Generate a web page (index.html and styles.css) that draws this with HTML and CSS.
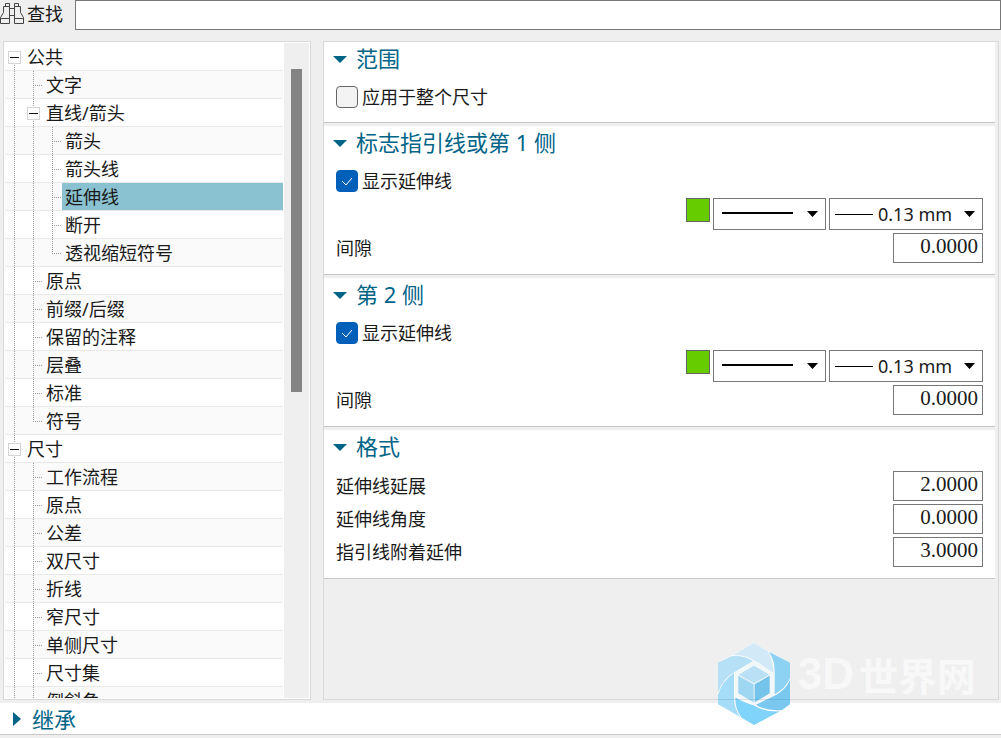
FILE: index.html
```html
<!DOCTYPE html>
<html lang="zh-CN">
<head>
<meta charset="utf-8">
<title>尺寸设置</title>
<link rel="stylesheet" href="styles.css">
</head>
<body>
<div class="search">
  <svg class="search-icon" viewBox="0 0 25 26" width="25" height="26" fill="none" stroke="#444" aria-hidden="true">
    <path d="M5.500 3.500h4v3h-4zM14.500 3.500h4v3h-4zM3.500 6.500h6v17h-9v-6l3-5zM20.500 6.500h-6v17h9v-6l-3-5zM.500 18.500h9M14.500 18.500h9M9.500 8.500h5M9.500 15.500h5"/>
  </svg>
  <label class="search-label" for="find">查找</label>
  <input class="search-box" id="find" type="text">
</div>

<main class="main">
  <nav class="tree" aria-label="设置类别">
    <ul class="tree-list">
      <li class="row"><span class="cell start"><button class="toggle" aria-label="折叠公共"></button></span><span class="name">公共</span></li>
      <li class="row"><span class="cell line"></span><span class="cell line stub"></span><span class="name">文字</span></li>
      <li class="row"><span class="cell line"></span><span class="cell line"><button class="toggle" aria-label="折叠直线/箭头"></button></span><span class="name">直线/箭头</span></li>
      <li class="row"><span class="cell line"></span><span class="cell line"></span><span class="cell line stub"></span><span class="name">箭头</span></li>
      <li class="row"><span class="cell line"></span><span class="cell line"></span><span class="cell line stub"></span><span class="name">箭头线</span></li>
      <li class="row"><span class="cell line"></span><span class="cell line"></span><span class="cell line stub"></span><span class="name selected">延伸线</span></li>
      <li class="row"><span class="cell line"></span><span class="cell line"></span><span class="cell line stub"></span><span class="name">断开</span></li>
      <li class="row"><span class="cell line"></span><span class="cell line"></span><span class="cell end stub"></span><span class="name">透视缩短符号</span></li>
      <li class="row"><span class="cell line"></span><span class="cell line stub"></span><span class="name">原点</span></li>
      <li class="row"><span class="cell line"></span><span class="cell line stub"></span><span class="name">前缀/后缀</span></li>
      <li class="row"><span class="cell line"></span><span class="cell line stub"></span><span class="name">保留的注释</span></li>
      <li class="row"><span class="cell line"></span><span class="cell line stub"></span><span class="name">层叠</span></li>
      <li class="row"><span class="cell line"></span><span class="cell line stub"></span><span class="name">标准</span></li>
      <li class="row"><span class="cell line"></span><span class="cell end stub"></span><span class="name">符号</span></li>
      <li class="row"><span class="cell line"><button class="toggle" aria-label="折叠尺寸"></button></span><span class="name">尺寸</span></li>
      <li class="row"><span class="cell line"></span><span class="cell line stub"></span><span class="name">工作流程</span></li>
      <li class="row"><span class="cell line"></span><span class="cell line stub"></span><span class="name">原点</span></li>
      <li class="row"><span class="cell line"></span><span class="cell line stub"></span><span class="name">公差</span></li>
      <li class="row"><span class="cell line"></span><span class="cell line stub"></span><span class="name">双尺寸</span></li>
      <li class="row"><span class="cell line"></span><span class="cell line stub"></span><span class="name">折线</span></li>
      <li class="row"><span class="cell line"></span><span class="cell line stub"></span><span class="name">窄尺寸</span></li>
      <li class="row"><span class="cell line"></span><span class="cell line stub"></span><span class="name">单侧尺寸</span></li>
      <li class="row"><span class="cell line"></span><span class="cell line stub"></span><span class="name">尺寸集</span></li>
      <li class="row"><span class="cell line"></span><span class="cell line stub"></span><span class="name">倒斜角</span></li>
    </ul>
    <div class="scrollbar"><div class="thumb"></div></div>
  </nav>

  <div class="panel">
    <section class="group group-short">
      <h2 class="title"><svg class="arrow" viewBox="0 0 14 7" width="14" height="7"><path d="M0 0h14L7 7z"/></svg>范围</h2>
      <label class="check"><input type="checkbox">应用于整个尺寸</label>
    </section>

    <section class="group">
      <h2 class="title"><svg class="arrow" viewBox="0 0 14 7" width="14" height="7"><path d="M0 0h14L7 7z"/></svg>标志指引线或第 1 侧</h2>
      <label class="check"><input type="checkbox" checked>显示延伸线</label>
      <div class="styles">
        <button class="swatch" aria-label="颜色"></button>
        <div class="combo combo-line">
          <select aria-label="线型"><option aria-label="实线"></option></select>
          <svg viewBox="0 0 113 32" width="113" height="32" aria-hidden="true"><path d="M9 14h71v2H9zM94 13h11l-5.500 6z"/></svg>
        </div>
        <div class="combo combo-width">
          <select aria-label="线宽"><option>0.13 mm</option></select>
          <svg viewBox="0 0 154 32" width="154" height="32" aria-hidden="true"><path d="M6 16h38v1H6zM135 13h11l-5.500 6z"/></svg>
        </div>
      </div>
      <div class="fields">
        <div class="field"><label for="gap1">间隙</label><input id="gap1" type="text" value="0.0000"></div>
      </div>
    </section>

    <section class="group">
      <h2 class="title"><svg class="arrow" viewBox="0 0 14 7" width="14" height="7"><path d="M0 0h14L7 7z"/></svg>第 2 侧</h2>
      <label class="check"><input type="checkbox" checked>显示延伸线</label>
      <div class="styles">
        <button class="swatch" aria-label="颜色"></button>
        <div class="combo combo-line">
          <select aria-label="线型"><option aria-label="实线"></option></select>
          <svg viewBox="0 0 113 32" width="113" height="32" aria-hidden="true"><path d="M9 14h71v2H9zM94 13h11l-5.500 6z"/></svg>
        </div>
        <div class="combo combo-width">
          <select aria-label="线宽"><option>0.13 mm</option></select>
          <svg viewBox="0 0 154 32" width="154" height="32" aria-hidden="true"><path d="M6 16h38v1H6zM135 13h11l-5.500 6z"/></svg>
        </div>
      </div>
      <div class="fields">
        <div class="field"><label for="gap2">间隙</label><input id="gap2" type="text" value="0.0000"></div>
      </div>
    </section>

    <section class="group">
      <h2 class="title"><svg class="arrow" viewBox="0 0 14 7" width="14" height="7"><path d="M0 0h14L7 7z"/></svg>格式</h2>
      <div class="fields fields-first">
        <div class="field"><label for="ext">延伸线延展</label><input id="ext" type="text" value="2.0000"></div>
        <div class="field"><label for="angle">延伸线角度</label><input id="angle" type="text" value="0.0000"></div>
        <div class="field"><label for="attach">指引线附着延伸</label><input id="attach" type="text" value="3.0000"></div>
      </div>
    </section>
  </div>
</main>

<footer class="inherit">
  <h2 class="title"><svg class="arrow" viewBox="0 0 8 14" width="8" height="14"><path d="M0 0l8 7-8 7z"/></svg>继承</h2>
</footer>

<div class="watermark">
  <svg viewBox="0 0 240 264" width="80" height="88" aria-hidden="true">
    <path fill="#fff" fill-opacity=".8" d="M120 9l108 59v125l-108 62-108-62V68z"/>
    <path fill="#d2eaf7" d="M56 46l64-37 41 24q21 36 17 76-18-28-56-47-26-18-66-16z"/>
    <path fill="#8dd2f3" d="M165 35l63 33v47q-15 33-46 48V98q1-36-17-63z"/>
    <path fill="#7ac8f0" d="M228 120v73l-24 17q-50 4-78-16l54-26q34-16 48-48z"/>
    <path fill="#80d3fa" d="M64 172q22 14 54 24 34 20 80 18l-78 41-37-22q-20-26-19-61z"/>
    <path fill="#a5dcf8" d="M12 165q12-42 48-66v71q0 36 19 61l-67-38z"/>
    <path fill="#b6e0f5" d="M12 68l40-19q38-4 65 14L62 96q-36 20-50 62z"/>
    <path fill="#f2f7fa" d="M120 63l59 35v66l-59 32-58-31V97z"/>
    <path fill="#b9e0f5" d="M120 77l46 27-46 26-46-26z"/>
    <path fill="#9fd6f2" d="M73 107l46 26v54l-46-27z"/>
    <path fill="#74c3ea" d="M167 107l-45 26v54l45-27z"/>
    <path fill="#3a6c88" fill-opacity=".18" d="M12 177h216v3H12z"/>
  </svg>
  <span class="mark-latin">3D</span><span class="mark-cjk">世界网</span>
</div>
</body>
</html>
```
FILE: styles.css
```css
* { box-sizing: border-box; }

body {
  margin: 0;
  height: 100vh;
  display: flex;
  flex-direction: column;
  position: relative;
  overflow: hidden;
  padding-bottom: 3px;
  background: #efefef;
  color: #1a1a1a;
  font: 18px/29px "Noto Sans", "Noto Sans CJK SC", sans-serif;
}

button, input, select { margin: 0; border-radius: 0; color: inherit; }

/* Search bar */
.search { display: flex; height: 30px; }
.search-icon { flex: none; }
.search-label { width: 50px; padding-left: 2px; }
.search-box { flex: 1; min-width: 0; border: 1px solid #777; background: #fff; font: inherit; }

.main {
  flex: 1;
  min-height: 0;
  display: grid;
  grid-template-columns: 308px 1fr;
  gap: 12px;
  margin: 11px 2px 3px 3px;
}

/* Category tree */
.tree {
  display: flex;
  min-height: 0;
  padding: 1px;
  border: 1px solid #d9d9d9;
  background: #fff;
}
.tree-list { flex: 1; margin: 0; padding: 0; list-style: none; overflow: hidden; }
.row { display: flex; height: 28px; border-bottom: 1px solid #e8e8e8; }
.row:nth-child(even) { background: #fafafa; }
.name { height: 27px; padding-left: 3px; white-space: nowrap; }
.selected { flex: 1; background: #8bc2d1; }

.cell {
  --down: repeating-linear-gradient(#999 0 1px, transparent 1px 2px);
  --across: repeating-linear-gradient(90deg, #999 0 1px, transparent 1px 2px);
  flex: none;
  width: 19px;
  height: 28px;
  padding: 8px 3px;
  background-repeat: no-repeat;
}
.start { background-image: var(--down); background-size: 1px 14px; background-position: 9px 14px; }
.line { background-image: var(--down); background-size: 1px 28px; background-position: 9px 0; }
.stub { background-image: var(--down), var(--across); background-size: 1px 28px, 9px 1px; background-position: 9px 0, 9px 14px; }
.end { background-size: 1px 14px, 9px 1px; }

.toggle {
  display: block;
  width: 13px;
  height: 13px;
  padding: 0;
  border: 1px solid #d5d5d5;
  background: linear-gradient(#111, #111) center / 9px 1px no-repeat #fff;
}

.scrollbar { width: 25px; margin-left: 1px; padding: 26px 7px 0; background: #efefef; }
.thumb { height: 323px; background: #848484; }

/* Settings groups */
.panel {
  display: flex;
  flex-direction: column;
  gap: 3px;
  padding-right: 3px;
  border: 1px solid #d9d9d9;
}
.group { padding: 0 12px 11px; border-bottom: 1px solid #c8c8c8; background: #fff; }
.group-short { padding-bottom: 14px; }

.title {
  display: flex;
  align-items: center;
  gap: 9px;
  height: 36px;
  margin: 0 0 0 -3px;
  padding-bottom: 3px;
  color: #006487;
  font-size: 22px;
  font-weight: 400;
}
.arrow { margin-top: 2px; fill: currentColor; }

.check { display: flex; align-items: center; gap: 4px; height: 22px; margin-top: 8px; }
.check input {
  appearance: none;
  width: 22px;
  height: 22px;
  border: 1px solid #666;
  border-radius: 4px;
  background: #f3f3f3;
}
.check input:checked {
  border-color: #005fb8;
  background: #005fb8 url("data:image/svg+xml,%3Csvg xmlns='http://www.w3.org/2000/svg' width='12' height='9'%3E%3Cpath d='M1 4l4 4 6-7' fill='none' stroke='white'/%3E%3C/svg%3E") center no-repeat;
}

.styles { display: flex; justify-content: flex-end; gap: 3px; margin-top: 6px; }
.swatch { width: 24px; height: 24px; padding: 0; border: 1px solid #666; background: #66cc00; }
.combo { display: grid; height: 32px; }
.combo-line { width: 113px; }
.combo-width { width: 154px; }
.combo select, .combo svg { grid-area: 1 / 1; }
.combo svg { pointer-events: none; }
.combo select {
  appearance: none;
  width: 100%;
  padding: 0 0 0 48px;
  border: 1px solid #777;
  background: #fff;
  font: 18px "Noto Sans", sans-serif;
}

.fields { display: grid; gap: 3px; margin-top: 3px; }
.fields-first { margin-top: 5px; }
.field { display: flex; justify-content: space-between; align-items: center; height: 30px; }
.field input {
  width: 90px;
  height: 30px;
  padding: 0 4px 3px;
  border: 1px solid #777;
  background: #fff;
  font: 21px "Liberation Serif", serif;
  text-align: right;
}

.inherit { height: 32px; padding-left: 16px; border-bottom: 1px solid #c8c8c8; background: #fff; }
.inherit .title { height: 32px; gap: 11px; padding: 0; }
.inherit .arrow { margin-top: 0; }

/* Overlaid site mark */
.watermark {
  position: absolute;
  right: 25px;
  bottom: 10px;
  display: flex;
  pointer-events: none;
  color: #f8f8f8;
  font-weight: 700;
  line-height: 68px;
}
.mark-latin { margin: 0 5px 0 4px; font-family: "Liberation Sans", sans-serif; font-size: 44px; }
.mark-cjk { font-family: "Noto Sans CJK SC", sans-serif; font-size: 39px; }
```
